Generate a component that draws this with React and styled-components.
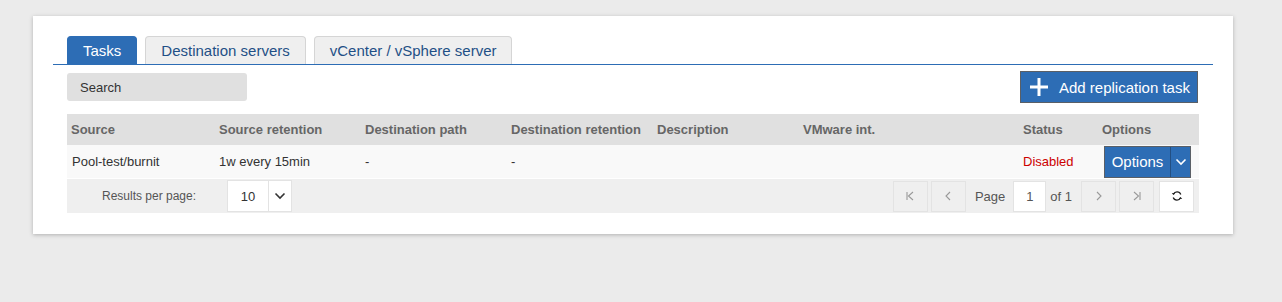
import React from 'react';
import styled, { createGlobalStyle } from 'styled-components';

const GlobalStyle = createGlobalStyle`
	body {
		margin: 0;
		background: #ebebeb;
		font-family: 'Liberation Sans', Arial, sans-serif;
	}
`;

const Page = styled.div`
	padding: 16px 33px;
`;

const Card = styled.div`
	width: 1200px;
	height: 218px;
	box-sizing: border-box;
	background: #fff;
	padding: 20px 20px 0 20px;
	box-shadow: 0 1px 4px rgba(0, 0, 0, 0.25);
`;

const TabBar = styled.div`
	display: flex;
	gap: 8px;
	padding-left: 14px;
	border-bottom: 1px solid #2d6db5;
`;

const Tab = styled.div`
	height: 28px;
	box-sizing: border-box;
	padding: 0 15px;
	display: flex;
	align-items: center;
	font-size: 15px;
	border: 1px solid ${(p) => (p.active ? '#2d6db5' : '#d5d5d5')};
	border-bottom: none;
	border-radius: 4px 4px 0 0;
	background: ${(p) => (p.active ? '#2d6db5' : '#efefef')};
	color: ${(p) => (p.active ? '#fff' : '#1f4f86')};
`;

const Toolbar = styled.div`
	display: flex;
	justify-content: space-between;
	align-items: flex-start;
	margin: 0 15px 0 14px;
	height: 49px;
`;

const Search = styled.div`
	margin-top: 8px;
	width: 180px;
	height: 28px;
	box-sizing: border-box;
	padding-left: 13px;
	display: flex;
	align-items: center;
	background: #e0e0e0;
	border-radius: 3px;
	font-size: 13px;
	color: #333;
`;

const AddButton = styled.div`
	margin-top: 6px;
	height: 32px;
	width: 178px;
	box-sizing: border-box;
	display: flex;
	align-items: center;
	gap: 10px;
	padding-left: 8px;
	background: #2d6db5;
	border: 1px solid #5a5f66;
	color: #fff;
	font-size: 15px;
`;

const Table = styled.div`
	margin: 0 14px;
	width: 1132px;
`;

const Row = styled.div`
	display: grid;
	grid-template-columns: 148px 146px 146px 146px 146px 220px 79px 101px;
	align-items: center;
	height: ${(p) => p.h}px;
	background: ${(p) => p.bg};
	border-bottom: ${(p) => (p.sep ? '1px solid #fff' : 'none')};
	box-sizing: border-box;
`;

const HeadCell = styled.div`
	padding-left: 4px;
	font-size: 13px;
	font-weight: bold;
	color: #666;
`;

const Cell = styled.div`
	padding-left: ${(p) => p.pl ?? 4}px;
	font-size: 13px;
	color: ${(p) => p.color || '#333'};
`;

const Split = styled.div`
	display: flex;
	height: 32px;
	width: 87px;
	margin-left: 6px;
	box-sizing: border-box;
	border: 1px solid #5a5f66;
	background: #2d6db5;
	color: #fff;
	font-size: 15px;
`;

const SplitMain = styled.div`
	flex: 1;
	display: flex;
	align-items: center;
	justify-content: center;
	border-right: 1px solid #234f82;
`;

const SplitArrow = styled.div`
	width: 19px;
	display: flex;
	align-items: center;
	justify-content: center;
`;

const Footer = styled.div`
	display: flex;
	align-items: center;
	height: 34px;
	background: #efefef;
`;

const PerPage = styled.div`
	margin-left: 35px;
	width: 125px;
	font-size: 12px;
	color: #555;
`;

const Select = styled.div`
	display: flex;
	height: 32px;
	width: 65px;
	box-sizing: border-box;
	background: #fff;
	border: 1px solid #e3e3e3;
	font-size: 13px;
	color: #333;
`;

const SelectValue = styled.div`
	width: 40px;
	display: flex;
	align-items: center;
	justify-content: center;
	border-right: 1px solid #e3e3e3;
`;

const SelectArrow = styled.div`
	flex: 1;
	display: flex;
	align-items: center;
	justify-content: center;
`;

const Pager = styled.div`
	margin-left: auto;
	margin-right: 5px;
	display: flex;
	align-items: center;
	gap: 3px;
	font-size: 13px;
	color: #555;
`;

const PageBtn = styled.div`
	width: 35px;
	height: 31px;
	box-sizing: border-box;
	display: flex;
	align-items: center;
	justify-content: center;
	background: ${(p) => (p.white ? '#fff' : '#efefef')};
	border: 1px solid #e3e3e3;
	margin-left: ${(p) => p.ml || 0}px;
`;

const PageLabel = styled.span`
	margin: 0 ${(p) => p.mr || 0}px 0 ${(p) => p.ml || 0}px;
`;

const PageInput = styled.div`
	width: 33px;
	height: 31px;
	box-sizing: border-box;
	display: flex;
	align-items: center;
	justify-content: center;
	background: #fff;
	border: 1px solid #e3e3e3;
	color: #555;
`;

const Chevron = ({ color = '#333' }) => (
	<svg width="12" height="8" viewBox="0 0 12 8">
		<path d="M1.5 1.5 L6 6 L10.5 1.5" fill="none" stroke={color} strokeWidth="1.6" />
	</svg>
);

const Nav = ({ d }) => (
	<svg width="12" height="12" viewBox="0 0 12 12">
		<path d={d} fill="none" stroke="#999" strokeWidth="1.1" />
	</svg>
);

const columns = [
	'Source',
	'Source retention',
	'Destination path',
	'Destination retention',
	'Description',
	'VMware int.',
	'Status',
	'Options',
];

function App() {
	return (
		<Page>
			<GlobalStyle />
			<Card>
				<TabBar>
					<Tab active>Tasks</Tab>
					<Tab>Destination servers</Tab>
					<Tab>vCenter / vSphere server</Tab>
				</TabBar>
				<Toolbar>
					<Search>Search</Search>
					<AddButton>
						<svg width="20" height="20" viewBox="0 0 20 20">
							<path d="M10 1 V19 M1 10 H19" stroke="#fff" strokeWidth="3" />
						</svg>
						Add replication task
					</AddButton>
				</Toolbar>
				<Table>
					<Row h={31} bg="#e0e0e0">
						{columns.map((c) => (
							<HeadCell key={c}>{c}</HeadCell>
						))}
					</Row>
					<Row h={34} bg="#f9f9f9" sep>
						<Cell pl={5}>Pool-test/burnit</Cell>
						<Cell>1w every 15min</Cell>
						<Cell>-</Cell>
						<Cell>-</Cell>
						<Cell />
						<Cell />
						<Cell color="#cc0000">Disabled</Cell>
						<Split>
							<SplitMain>Options</SplitMain>
							<SplitArrow>
								<Chevron color="#fff" />
							</SplitArrow>
						</Split>
					</Row>
					<Footer>
						<PerPage>Results per page:</PerPage>
						<Select>
							<SelectValue>10</SelectValue>
							<SelectArrow>
								<Chevron />
							</SelectArrow>
						</Select>
						<Pager>
							<PageBtn>
								<Nav d="M3 2 V10 M9 2 L4.5 6 L9 10" />
							</PageBtn>
							<PageBtn>
								<Nav d="M8 2 L4 6 L8 10" />
							</PageBtn>
							<PageLabel ml={6} mr={5}>Page</PageLabel>
							<PageInput>1</PageInput>
							<PageLabel ml={1} mr={6}>of 1</PageLabel>
							<PageBtn>
								<Nav d="M4 2 L8 6 L4 10" />
							</PageBtn>
							<PageBtn>
								<Nav d="M3 2 L7.5 6 L3 10 M9 2 V10" />
							</PageBtn>
							<PageBtn white ml={2}>
								<svg width="12" height="12" viewBox="0 0 12 12">
									<path
										d="M2.2 7.5 A4 4 0 0 0 9.6 7.8 M9.8 4.5 A4 4 0 0 0 2.4 4.2"
										fill="none"
										stroke="#222"
										strokeWidth="1.3"
									/>
									<path d="M0.8 3 L2.4 5 L4.2 3.2 Z M11.2 9 L9.6 7 L7.8 8.8 Z" fill="#222" />
								</svg>
							</PageBtn>
						</Pager>
					</Footer>
				</Table>
			</Card>
		</Page>
	);
}

export default App;
